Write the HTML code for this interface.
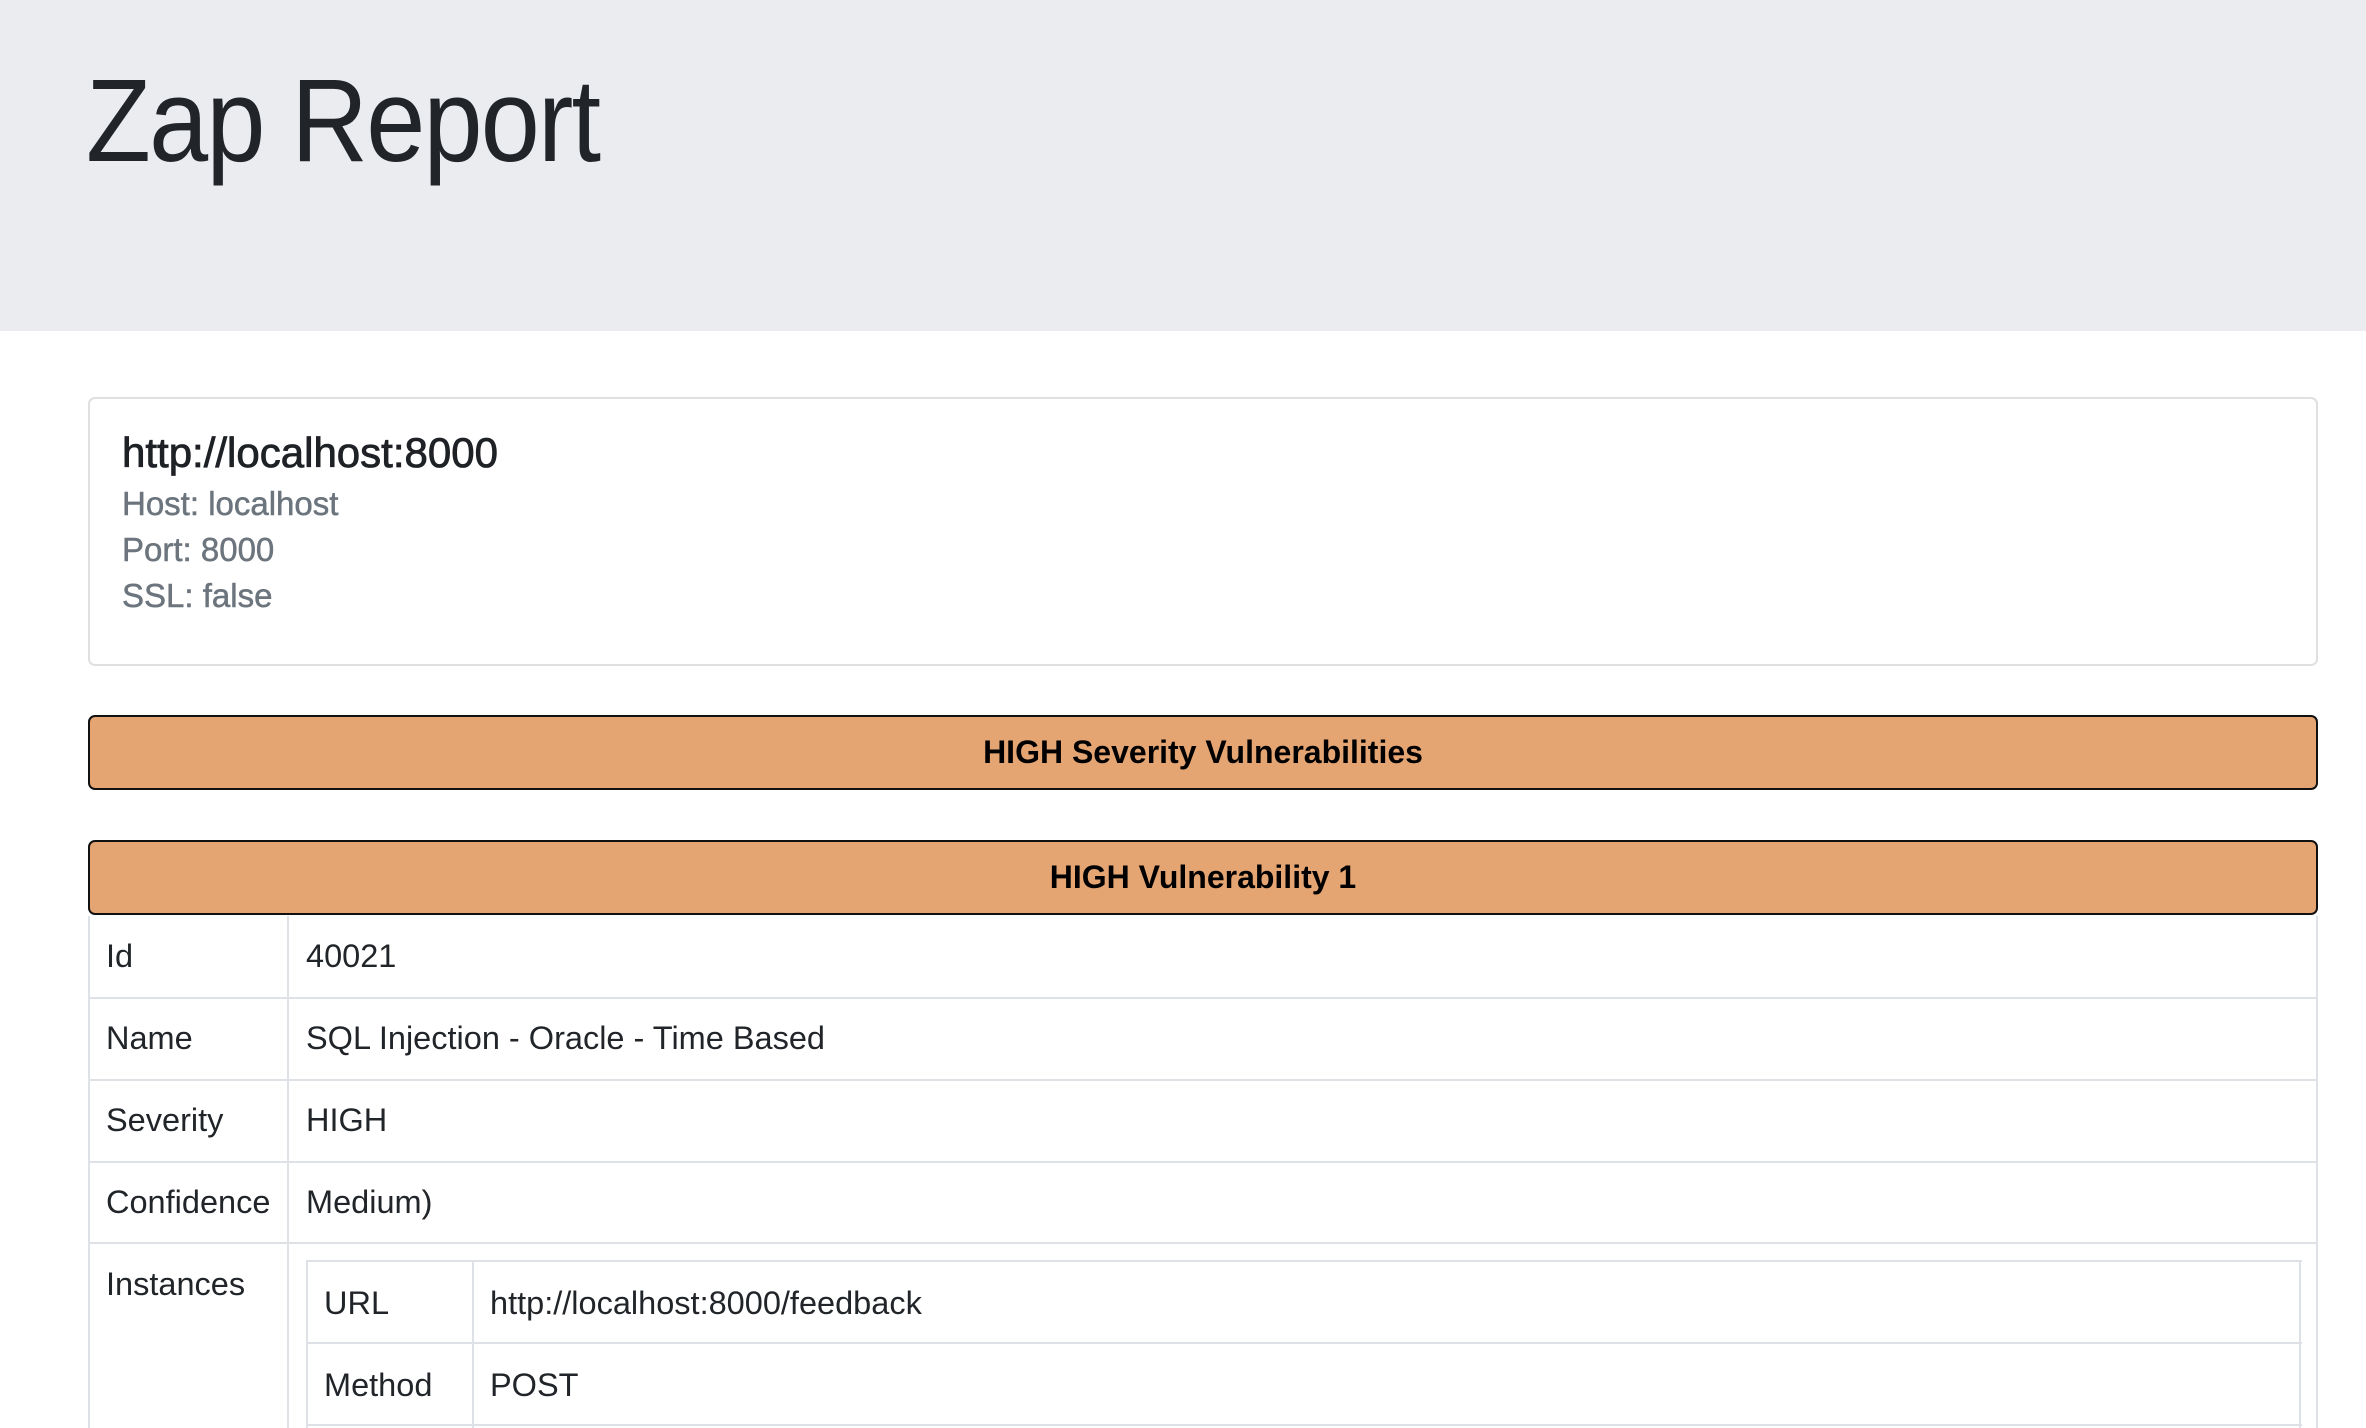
<!DOCTYPE html>
<html><head><meta charset="utf-8"><style>
body{margin:0;width:2366px;height:1428px;overflow:hidden;background:#fff;font-family:"Liberation Sans",sans-serif;color:#212529;position:relative}
.a{position:absolute}
.hdr{left:0;top:0;width:2366px;height:331px;background:#ebecf0}
h1{position:absolute;left:86px;top:56px;margin:0;font-weight:400;font-size:118px;letter-spacing:-2px;line-height:130px;color:#212529;transform:scaleX(0.9);transform-origin:left top}
.card{left:88px;top:397px;width:2226px;height:265px;border:2px solid #e0e0e0;border-radius:7px}
.ct{left:122px;top:429px;font-size:42px;font-weight:400;color:#1e2125;-webkit-text-stroke:0.8px #1e2125}
.cs{left:122px;font-size:33px;color:#6c757d;-webkit-text-stroke:0.5px #6c757d}
.bar{left:88px;width:2226px;height:71px;background:#e5a573;border:2px solid #111;border-radius:7px;text-align:center;font-weight:700;font-size:32px;line-height:71px;color:#000}
.hl{background:#dee2e6;height:2px}
.vl{background:#dee2e6;width:2px}
.t{font-size:32.5px;color:#212529}
</style></head><body>
<div class="a hdr"></div>
<h1>Zap Report</h1>
<div class="a card"></div>
<div class="a ct">http://localhost:8000</div>
<div class="a cs" style="top:485px">Host: localhost</div>
<div class="a cs" style="top:531px">Port: 8000</div>
<div class="a cs" style="top:577px">SSL: false</div>
<div class="a bar" style="top:715px">HIGH Severity Vulnerabilities</div>
<div class="a bar" style="top:840px">HIGH Vulnerability 1</div>
<div class="a vl" style="left:88px;top:916px;height:512px"></div>
<div class="a vl" style="left:287px;top:916px;height:512px"></div>
<div class="a vl" style="left:2316px;top:916px;height:512px"></div>
<div class="a hl" style="left:88px;top:997px;width:2230px"></div>
<div class="a hl" style="left:88px;top:1079px;width:2230px"></div>
<div class="a hl" style="left:88px;top:1161px;width:2230px"></div>
<div class="a hl" style="left:88px;top:1242px;width:2230px"></div>
<div class="a hl" style="left:306px;top:1260px;width:1996px"></div>
<div class="a hl" style="left:306px;top:1342px;width:1996px"></div>
<div class="a hl" style="left:306px;top:1424px;width:1996px"></div>
<div class="a vl" style="left:306px;top:1260px;height:168px"></div>
<div class="a vl" style="left:472px;top:1260px;height:168px"></div>
<div class="a vl" style="left:2299px;top:1260px;height:168px"></div>
<div class="a t" style="left:106px;top:938px">Id</div>
<div class="a t" style="left:306px;top:938px">40021</div>
<div class="a t" style="left:106px;top:1020px">Name</div>
<div class="a t" style="left:306px;top:1020px">SQL Injection - Oracle - Time Based</div>
<div class="a t" style="left:106px;top:1102px">Severity</div>
<div class="a t" style="left:306px;top:1102px">HIGH</div>
<div class="a t" style="left:106px;top:1184px">Confidence</div>
<div class="a t" style="left:306px;top:1184px">Medium)</div>
<div class="a t" style="left:106px;top:1266px">Instances</div>
<div class="a t" style="left:324px;top:1285px">URL</div>
<div class="a t" style="left:490px;top:1285px">http://localhost:8000/feedback</div>
<div class="a t" style="left:324px;top:1367px">Method</div>
<div class="a t" style="left:490px;top:1367px">POST</div>
</body></html>
